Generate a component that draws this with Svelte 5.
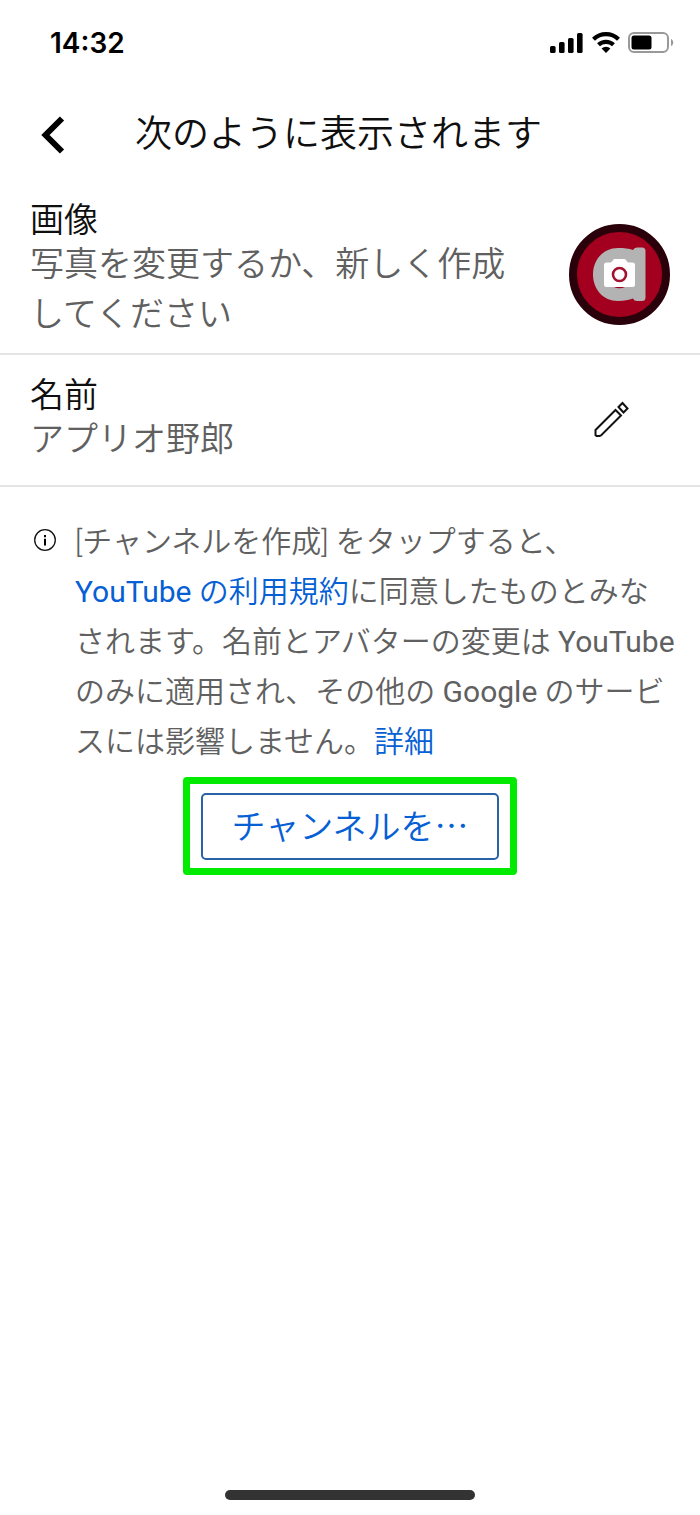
<script lang="ts">
  let time = $state('14:32');
  let name = $state('アプリオ野郎');

  const bars = [
    { x: 0, h: 7 },
    { x: 9, h: 11 },
    { x: 18, h: 15 },
    { x: 27, h: 20 },
  ];
</script>

<svelte:head>
  <title>次のように表示されます</title>
</svelte:head>

<div class="screen" lang="ja">
  <div class="status">
    <span class="time">{time}</span>
    <div class="indicators">
      <svg width="34" height="22" viewBox="0 0 34 22" aria-hidden="true">
        {#each bars as bar}
          <rect x={bar.x} y={21 - bar.h} width="5.6" height={bar.h} rx="1.6" />
        {/each}
      </svg>
      <svg width="28" height="22" viewBox="0 0 28 22" aria-hidden="true">
        <path d="M1.5 7.2a18 18 0 0 1 25 0M6.5 12.8a11 11 0 0 1 15 0" fill="none" stroke="#000" stroke-width="4.2" />
        <path d="M14 21l-4.4-4.4a6 6 0 0 1 8.800 0z" />
      </svg>
      <svg width="46" height="22" viewBox="0 0 46 22" aria-hidden="true">
        <rect x="1" y="1" width="39" height="19" rx="5" fill="none" stroke="#999" stroke-width="2" />
        <rect x="3.5" y="3.5" width="20" height="14" rx="2.5" />
        <path d="M43 7c3 1 3 6 0 7z" fill="#999" />
      </svg>
    </div>
  </div>

  <header>
    <button class="back" aria-label="戻る">
      <svg width="24" height="38" viewBox="0 0 24 38" aria-hidden="true">
        <path d="M21 2.5L4.5 19L21 35.5" fill="none" stroke="#000" stroke-width="6" />
      </svg>
    </button>
    <h1>次のように表示されます</h1>
  </header>

  <main>
    <section class="row">
      <div class="text photo">
        <h2>画像</h2>
        <p>写真を変更するか、新しく作成してください</p>
      </div>
      <button class="avatar" aria-label="写真を変更">
        <svg width="101" height="101" viewBox="0 0 101 101" aria-hidden="true">
          <circle cx="50.5" cy="50.5" r="46.5" fill="#a3001f" stroke="#2a000a" stroke-width="8" />
          <path
            d="M49 24C34 24 24 36 24 50.5S34 77 49 77C55 77 60 76 64 74.5Q65 77 68 77H73Q76.5 77 76.5 73.5V27Q76.5 23.5 73 23.5H68Q65 23.5 64 26C60 24.5 55 24 49 24Z"
            fill="#b3b3b3"
          />
          <path d="M45 63Q50.5 65.5 56 63Z" fill="#a3001f" />
          <path
            d="M45 35H56L59 38.5H63.5Q66 38.5 66 41V60.5Q66 63 63.5 63H37.5Q35 63 35 60.5V41Q35 38.5 37.5 38.5H42Z"
            fill="#fff"
          />
          <circle cx="50.5" cy="50.5" r="6.5" fill="#fff" stroke="#a3122e" stroke-width="2.6" />
        </svg>
      </button>
    </section>

    <section class="row">
      <div class="text name">
        <h2>名前</h2>
        <p>{name}</p>
      </div>
      <button class="edit" aria-label="名前を編集">
        <svg width="38" height="38" viewBox="0 0 38 38" fill="none" stroke="#111" stroke-width="2" aria-hidden="true">
          <path d="M2.5 29L22.5 9L28 14.5L8 34.5L6.5 35H3.5L2.5 34Z" />
          <path d="M25.5 6L29.5 2L34.5 7.5L30.5 11.5Z" />
        </svg>
      </button>
    </section>

    <section class="notice">
      <svg width="24" height="24" viewBox="0 0 24 24" aria-hidden="true">
        <circle cx="12" cy="12" r="10.3" fill="none" stroke="#111" stroke-width="1.3" />
        <path d="M11 7h2v2.3h-2zM11 10.8h2v6.7h-2z" />
      </svg>
      <p>
        [チャンネルを作成] をタップすると、<br />
        <a href="#terms"><span class="latin">YouTube</span> の利用規約</a>に同意したものとみな<br />
        されます。名前とアバターの変更は <span class="latin">YouTube</span><br />
        のみに適用され、その他の <span class="latin">Google</span> のサービ<br />
        スには影響しません。<a href="#details">詳細</a>
      </p>
    </section>

    <div class="highlight">
      <button class="create">チャンネルを…</button>
    </div>
  </main>

  <div class="home"></div>
</div>

<style>
  :global(body) {
    background: #fff;
  }

  .screen {
    display: flex;
    flex-direction: column;
    min-height: 100vh;
    box-sizing: border-box;
    padding-bottom: 15px;
    background: #fff;
    color: #0f0f0f;
    font-family: Roboto, 'Noto Sans CJK JP', sans-serif;
  }

  button {
    padding: 0;
    border: 0;
    background: none;
    cursor: pointer;
  }

  svg {
    display: block;
    flex: none;
  }

  h1,
  h2,
  p {
    margin: 0;
    font-weight: 350;
  }

  .status {
    display: flex;
    justify-content: space-between;
    align-items: center;
    height: 86px;
    padding: 0 26px 0 50px;
  }

  .time {
    font-family: Inter, sans-serif;
    font-size: 28px;
    font-weight: 600;
    color: #000;
  }

  .indicators {
    display: flex;
    gap: 8px;
  }

  header {
    display: flex;
    align-items: center;
    gap: 70px;
    height: 98px;
    margin-bottom: 11px;
    padding: 0 30px 0 41px;
  }

  h1 {
    font-size: 37px;
    line-height: 50px;
  }

  .row {
    display: flex;
    align-items: center;
    justify-content: space-between;
    padding: 0 30px;
    border-bottom: 2px solid #e5e5e5;
  }

  .text {
    max-width: 480px;
  }

  .photo {
    padding: 7px 0 14px;
  }

  .name {
    padding: 22px 0 21px;
  }

  h2 {
    font-size: 34px;
    line-height: 37px;
  }

  .text p {
    font-size: 34px;
    line-height: 50px;
    color: #606060;
  }

  .avatar {
    border-radius: 50%;
  }

  .edit {
    display: flex;
    justify-content: center;
    width: 116px;
  }

  .notice {
    display: flex;
    gap: 18px;
    padding: 30px 20px 0 33px;
  }

  .notice svg {
    margin-top: 11px;
  }

  .notice p {
    font-size: 30px;
    line-height: 50px;
    color: #606060;
  }

  .latin {
    font-weight: 400;
  }

  a {
    color: #065fd4;
    text-decoration: none;
  }

  .highlight {
    width: fit-content;
    margin: 10px auto 0;
    padding: 9px 11px 8px;
    border: 7px solid #00eb00;
    border-radius: 4px;
  }

  .create {
    display: block;
    padding: 4px 29px 8px;
    border: 2px solid #2a62a8;
    border-radius: 5px;
    font-family: 'Noto Sans CJK JP', sans-serif;
    font-size: 34px;
    font-weight: 350;
    line-height: 51px;
    color: #065fd4;
  }

  .home {
    width: 250px;
    height: 10px;
    margin: auto auto 0;
    border-radius: 5px;
    background: #333;
  }
</style>
